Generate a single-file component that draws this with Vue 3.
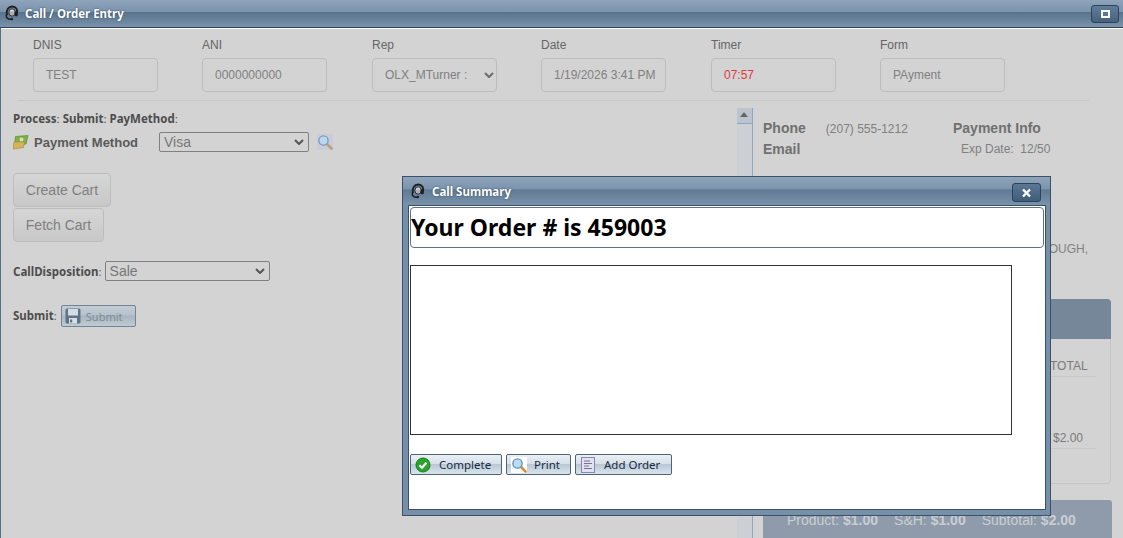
<script setup>
const fields = [
  { label: "DNIS", value: "TEST" },
  { label: "ANI", value: "0000000000" },
  { label: "Rep", value: "OLX_MTurner :", select: true },
  { label: "Date", value: "1/19/2026 3:41 PM" },
  { label: "Timer", value: "07:57", red: true },
  { label: "Form", value: "PAyment" },
];
</script>

<template>
  <div class="page">
    <header class="titlebar">
      <svg class="headset" viewBox="0 0 16 16">
        <path d="M3.2 10.5C1.8 5 4.8 1 8.8 1s6 3.6 5 7.5" fill="none" stroke="#1f1f1f" stroke-width="2" />
        <ellipse cx="8.6" cy="7.4" rx="3.4" ry="4" fill="#a9b0b7" stroke="#2a2a2a" />
        <path d="M6.5 6.5c1-1.5 3-1.5 4 0" fill="none" stroke="#eee" />
        <rect x="11.3" y="6" width="3.4" height="5.5" rx="1.4" fill="#1f1f1f" />
        <path d="M2.6 9.5c-.8 3 .8 5.5 5.2 5.2" fill="none" stroke="#1f1f1f" stroke-width="1.6" />
        <circle cx="8.4" cy="14.4" r="1.3" fill="#1f1f1f" />
      </svg>
      <span class="title-text">Call / Order Entry</span>
      <span class="win-btn"><i></i></span>
    </header>

    <div class="body">
      <div class="fields">
        <div v-for="f in fields" :key="f.label" class="field">
          <label>{{ f.label }}</label>
          <div class="box" :class="{ red: f.red, sel: f.select }">
            {{ f.value }}
            <svg v-if="f.select" class="chev" viewBox="0 0 10 6"><path d="M1 1l4 4 4-4" fill="none" stroke="#6b6b6b" stroke-width="2" /></svg>
          </div>
        </div>
      </div>
      <div class="rule"></div>

      <div class="main">
        <section class="left">
          <p class="crumbs"><b>Process</b>: <b>Submit</b>: <b>PayMethod</b>:</p>
          <div class="pay-row">
            <svg class="ico16" viewBox="0 0 16 16">
              <path d="M2.5 2.5l12.5-1-2 8.5L1.5 11z" fill="#7fb04a" stroke="#5c8a35" stroke-width=".7" />
              <path d="M1 8l10.5 0-1 5.5L0 15z" fill="#d4b35a" stroke="#a98c3c" stroke-width=".7" />
              <circle cx="8.5" cy="5.5" r="2" fill="#cfe3a8" />
            </svg>
            <b class="pay-label">Payment Method</b>
            <div class="sel-box pay-sel">Visa<svg class="chev" viewBox="0 0 10 6"><path d="M1 1l4 4 4-4" fill="none" stroke="#555" stroke-width="2" /></svg></div>
            <svg class="ico16 mag" viewBox="0 0 16 16">
              <path d="M9.5 9.5l5 5" stroke="#b9a27e" stroke-width="2.6" stroke-linecap="round" />
              <circle cx="6.5" cy="6.5" r="4.6" fill="#bcd6ea" stroke="#7c9fbb" stroke-width="1.4" />
            </svg>
          </div>
          <button class="cart-btn">Create Cart</button>
          <button class="cart-btn fetch">Fetch Cart</button>
          <div class="disp-row">
            <span><b>CallDisposition</b>:</span>
            <div class="sel-box disp-sel">Sale<svg class="chev" viewBox="0 0 10 6"><path d="M1 1l4 4 4-4" fill="none" stroke="#555" stroke-width="2" /></svg></div>
          </div>
          <div class="submit-row">
            <span class="submit-label"><b>Submit</b>:</span>
            <button class="sub-btn">
              <svg class="ico16 floppy" viewBox="0 0 16 16">
                <rect x=".5" y=".5" width="15" height="15" rx="1.5" fill="#5c7488" />
                <rect x="3" y="1" width="10" height="6.5" fill="#d5dde3" />
                <rect x="4" y="10" width="8" height="5.5" fill="#d9dee2" />
                <rect x="5" y="11.5" width="2.2" height="3" fill="#5c7488" />
              </svg>
              Submit
            </button>
          </div>
        </section>

        <div class="scrollbar"><span class="arrow"></span></div>

        <section class="right">
          <div class="info">
            <div class="info-col">
              <div><b class="info-key">Phone</b><span class="phone">(207) 555-1212</span></div>
              <div><b class="info-key">Email</b></div>
            </div>
            <div class="info-col pay-info">
              <div><b class="info-key">Payment Info</b></div>
              <div class="exp">Exp Date:&nbsp; 12/50</div>
            </div>
          </div>
          <div class="address">DOUGH,</div>
          <div class="cart">
            <div class="cart-head"></div>
            <div class="cart-body">
              <div class="cart-row head-row"><span>TOTAL</span></div>
              <div class="cart-row price-row"><span>$2.00</span></div>
            </div>
          </div>
          <div class="totals">
            <span>Product: <b>$1.00</b></span>
            <span>S&amp;H: <b>$1.00</b></span>
            <span>Subtotal: <b>$2.00</b></span>
          </div>
        </section>
      </div>
    </div>

    <div class="modal">
      <div class="modal-title">
        <svg class="headset" viewBox="0 0 16 16">
          <path d="M3.2 10.5C1.8 5 4.8 1 8.8 1s6 3.6 5 7.5" fill="none" stroke="#1f1f1f" stroke-width="2" />
          <ellipse cx="8.6" cy="7.4" rx="3.4" ry="4" fill="#a9b0b7" stroke="#2a2a2a" />
          <path d="M6.5 6.5c1-1.5 3-1.5 4 0" fill="none" stroke="#eee" />
          <rect x="11.3" y="6" width="3.4" height="5.5" rx="1.4" fill="#1f1f1f" />
          <path d="M2.6 9.5c-.8 3 .8 5.5 5.2 5.2" fill="none" stroke="#1f1f1f" stroke-width="1.6" />
          <circle cx="8.4" cy="14.4" r="1.3" fill="#1f1f1f" />
        </svg>
        <span class="modal-text">Call Summary</span>
        <span class="close-btn">
          <svg viewBox="0 0 10 10"><path d="M1.5 1.5l7 7M8.5 1.5l-7 7" stroke="#fff" stroke-width="2.4" /></svg>
        </span>
      </div>
      <div class="modal-body">
        <div class="order-box">Your Order # is 459003</div>
        <div class="summary"></div>
        <div class="actions">
          <button class="act complete">
            <svg class="ico16" viewBox="0 0 16 16">
              <circle cx="8" cy="8" r="7" fill="#2aa52a" stroke="#1a7a1a" />
              <path d="M4.5 8.2l2.5 2.5 4.5-5" fill="none" stroke="#fff" stroke-width="2.2" />
            </svg>
            <span>Complete</span>
          </button>
          <button class="act print">
            <svg class="ico16 white-bg" viewBox="0 0 16 16">
              <path d="M9.5 9.5l5 5" stroke="#e08a3a" stroke-width="2.6" stroke-linecap="round" />
              <circle cx="6.5" cy="6.5" r="4.6" fill="#bcdcf2" stroke="#5f93bd" stroke-width="1.4" />
            </svg>
            <span>Print</span>
          </button>
          <button class="act add">
            <svg class="ico16" viewBox="0 0 16 16">
              <rect x="1.5" y=".5" width="13" height="15" fill="#e4e0f2" stroke="#8c88ad" />
              <path d="M4 4h6M4 6.5h8M4 9h5M4 11.5h8" stroke="#77738f" stroke-width="1.2" />
            </svg>
            <span>Add Order</span>
          </button>
        </div>
      </div>
    </div>
  </div>
</template>

<style>
html,
body {
  margin: 0;
  background: #d3d3d3;
}
</style>

<style scoped>
.page {
  position: relative;
  width: 1123px;
  height: 538px;
  overflow: hidden;
  background: #d3d3d3;
  font-family: "Liberation Sans", Arial, sans-serif;
}

/* top window bar */
.titlebar {
  display: flex;
  align-items: center;
  box-sizing: border-box;
  height: 28px;
  padding: 0 4px 1px 4px;
  background: linear-gradient(#8ea4bb, #7b93ac 44%, #58738e 45%, #7a92ab);
  border-bottom: 1px solid #2f4257;
}
.headset {
  width: 15px;
  height: 16px;
  flex: none;
}
.title-text {
  margin-left: 6px;
  color: #fff;
  font: bold 11.5px "Noto Sans", sans-serif;
  text-shadow: 0 0 2px #2f4257;
}
.win-btn {
  display: flex;
  align-items: center;
  justify-content: center;
  box-sizing: border-box;
  width: 28px;
  height: 18px;
  margin-left: auto;
  margin-top: 2px;
  background: linear-gradient(#5f7d9b, #46627f);
  border: 1px solid #2f4257;
  border-radius: 3px;
}
.win-btn i {
  box-sizing: border-box;
  width: 9px;
  height: 8px;
  background: #5a7795;
  border: 2px solid #fff;
}

.body {
  box-sizing: border-box;
  height: 510px;
  border-top: 1px solid #fff;
  border-left: 1px solid #fff;
  position: relative;
}
.body::before {
  content: "";
  position: absolute;
  left: -1px;
  top: -1px;
  bottom: 0;
  width: 1px;
  background: #54708c;
}

/* top fields */
.fields {
  display: flex;
  gap: 44px;
  padding: 9px 0 0 32px;
}
.field {
  width: 125px;
  flex: none;
}
.field:nth-child(3),
.field:nth-child(5) {
  margin-left: 1px;
}
.field label {
  display: block;
  height: 20px;
  font-size: 12px;
  line-height: 15px;
  color: #666;
}
.box {
  display: flex;
  align-items: center;
  justify-content: space-between;
  box-sizing: border-box;
  height: 34px;
  padding: 0 12px;
  font-size: 12px;
  color: #808080;
  white-space: nowrap;
  background: #d3d3d3;
  border: 1px solid #bdbdbd;
  border-radius: 4px;
}
.box.red {
  color: #e0393f;
  padding-left: 12px;
}
.box.sel {
  padding-right: 2px;
}
.chev {
  width: 10px;
  height: 6px;
  flex: none;
}
.rule {
  height: 1px;
  margin: 8px 34px 0 17px;
  background: #c6c6c6;
}

.main {
  display: flex;
  padding-top: 7px;
}
.left {
  box-sizing: border-box;
  width: 736px;
  padding-left: 12px;
  flex: none;
}
.crumbs {
  margin: 0;
  height: 18px;
  font: 11.5px/22px "Noto Sans", sans-serif;
  color: #555;
}
.crumbs b,
.disp-row b,
.submit-row b {
  color: #4d4d4d;
}
.pay-row {
  display: flex;
  align-items: center;
  height: 20px;
  margin-top: 6px;
}
.ico16 {
  width: 16px;
  height: 16px;
  flex: none;
}
.pay-label {
  margin-left: 5px;
  font: bold 13px "Liberation Sans", sans-serif;
  color: #5a5a5a;
  width: 125px;
}
.sel-box {
  display: flex;
  align-items: center;
  justify-content: space-between;
  box-sizing: border-box;
  height: 20px;
  padding: 0 4px;
  font: 14px "Liberation Sans", sans-serif;
  color: #777;
  border: 1px solid #808080;
  border-radius: 2px;
}
.pay-sel {
  width: 150px;
}
.mag {
  margin-left: 8px;
  background: #cbcbdb;
}
.cart-btn {
  display: block;
  box-sizing: border-box;
  width: 98px;
  height: 34px;
  margin-top: 21px;
  padding: 0 0 1px;
  font: 14px "Liberation Sans", sans-serif;
  color: #808080;
  background: linear-gradient(#d6d6d6, #c8c8c8);
  border: 1px solid #bdbdbd;
  border-radius: 4px;
}
.cart-btn.fetch {
  width: 91px;
  margin-top: 1px;
}
.disp-row,
.submit-row {
  display: flex;
  align-items: center;
  font: 11.5px "Noto Sans", sans-serif;
  color: #666;
}
.disp-row {
  margin-top: 19px;
  gap: 3px;
}
.disp-sel {
  width: 165px;
}
.submit-row {
  margin-top: 24px;
  gap: 4px;
}
.submit-label {
  margin-top: -2px;
}
.sub-btn {
  display: flex;
  align-items: center;
  gap: 5px;
  box-sizing: border-box;
  width: 75px;
  height: 22px;
  padding: 0 0 0 3px;
  font: 11px "Noto Sans", sans-serif;
  color: #7d8a94;
  background: linear-gradient(#c4ccd3, #b7c2cc 45%, #a8b5c1 50%, #c0cad3);
  border: 1px solid #71859a;
  border-radius: 2px;
}

.scrollbar {
  box-sizing: border-box;
  width: 16px;
  height: 431px;
  flex: none;
  background: #ccd0d5;
  border-right: 1px solid #8fa5c0;
}
.arrow {
  display: block;
  position: relative;
  height: 15px;
  background: #bcc5cf;
  border-bottom: 1px solid #8fa5c0;
}
.arrow::after {
  content: "";
  position: absolute;
  left: 3px;
  top: 4px;
  border: 4px solid transparent;
  border-top: 0;
  border-bottom: 5px solid #666;
}

.right {
  box-sizing: border-box;
  width: 349px;
  margin-left: 10px;
  flex: none;
}
.info {
  display: flex;
  padding-top: 10px;
  height: 40px;
  font-size: 12px;
  line-height: 20px;
  color: #808080;
}
.info-col {
  width: 190px;
  flex: none;
}
.info-key {
  font-size: 14px;
  color: #707070;
}
.phone {
  margin-left: 20px;
}
.exp {
  padding-left: 8px;
}
.address {
  margin-top: 83px;
  height: 16px;
  padding-left: 277px;
  font-size: 12px;
  line-height: 16px;
  color: #808080;
}
.cart {
  margin-top: 42px;
  width: 348px;
  height: 185px;
  box-sizing: border-box;
  border: 1px solid #c4c4c4;
  border-radius: 4px;
}
.cart-head {
  height: 40px;
  margin: -1px;
  background: #76879a;
  border-radius: 4px 4px 0 0;
}
.cart-row {
  display: flex;
  margin-right: 14px;
  padding-left: 286px;
  font-size: 12px;
  color: #7a7a7a;
  border-bottom: 1px solid #c9c9c9;
}
.head-row {
  margin-top: 21px;
  height: 17px;
  line-height: 14px;
}
.price-row {
  margin-top: 54px;
  height: 17px;
  line-height: 14px;
  padding-left: 289px;
}
.totals {
  display: flex;
  gap: 16px;
  box-sizing: border-box;
  height: 50px;
  margin-top: 16px;
  padding: 12px 0 0 24px;
  font-size: 14px;
  color: #c8ced5;
  background: #8f9baa;
  border-radius: 3px;
}

/* dialog */
.modal {
  position: absolute;
  left: 402px;
  top: 176px;
  box-sizing: border-box;
  width: 649px;
  height: 340px;
  padding: 0 4px 5px 5px;
  background: #7690aa;
  border: 1px solid #3d5166;
}
.modal-title {
  display: flex;
  align-items: center;
  height: 28px;
  margin: 0 -4px 0 -5px;
  padding: 0 9px 0 7px;
  background: linear-gradient(#8ea4bb, #7b93ac 44%, #5f7a95 45%, #7a92ab);
}
.modal-text {
  margin-left: 7px;
  color: #fff;
  font: bold 11.5px "Noto Sans", sans-serif;
  text-shadow: 0 0 2px #2f4257;
}
.close-btn {
  display: flex;
  align-items: center;
  justify-content: center;
  box-sizing: border-box;
  width: 29px;
  height: 19px;
  margin-left: auto;
  margin-top: 3px;
  background: linear-gradient(#5a7795, #3f5c7a);
  border: 1px solid #2f4257;
  border-radius: 3px;
}
.close-btn svg {
  width: 11px;
  height: 10px;
}
.modal-body {
  box-sizing: border-box;
  height: 305px;
  padding: 1px 0 0 1px;
  background: #fff;
  border: 1px solid #3d5166;
}
.order-box {
  box-sizing: border-box;
  width: 634px;
  height: 41px;
  padding-left: 0;
  font: bold 23px/38px "Noto Sans", sans-serif;
  color: #000;
  border: 1px solid #5f7287;
  border-radius: 4px;
}
.summary {
  box-sizing: border-box;
  width: 602px;
  height: 170px;
  margin-top: 17px;
  border: 1px solid #333;
}
.actions {
  display: flex;
  gap: 4px;
  margin-top: 19px;
}
.act {
  display: flex;
  align-items: center;
  box-sizing: border-box;
  height: 21px;
  padding: 0 0 0 4px;
  font: 11.5px "Noto Sans", sans-serif;
  color: #1c2a44;
  background: linear-gradient(#e9eff4, #d7e1e9 45%, #b9c8d5 50%, #dae4ec);
  border: 1px solid #4d6478;
  border-radius: 2px;
}
.complete {
  width: 92px;
}
.print {
  width: 65px;
}
.add {
  width: 97px;
}
.complete span {
  margin-left: 8px;
}
.print span {
  margin-left: 7px;
}
.add span {
  margin-left: 8px;
}
.white-bg {
  background: #fff;
}
</style>
